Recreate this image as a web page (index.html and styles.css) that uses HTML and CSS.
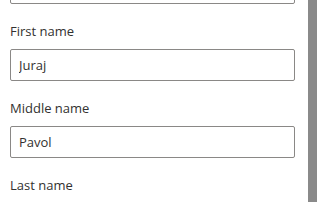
FILE: index.html
```html
<!DOCTYPE html>
<html lang="en">
<head>
<meta charset="utf-8">
<title>Name form</title>
<link rel="stylesheet" href="styles.css">
</head>
<body>
<div class="page">
  <form class="form">
    <div class="field field-first">
      <input class="input" type="text" value="" aria-label="Title">
    </div>
    <div class="field">
      <label class="label" for="first">First name</label>
      <input class="input" id="first" type="text" value="Juraj">
    </div>
    <div class="field">
      <label class="label" for="middle">Middle name</label>
      <input class="input" id="middle" type="text" value="Pavol">
    </div>
    <div class="field">
      <label class="label" for="last">Last name</label>
      <input class="input" id="last" type="text" value="">
    </div>
  </form>
  <div class="scrollbar"></div>
</div>
</body>
</html>
```
FILE: styles.css
```css
html, body {
  margin: 0;
  padding: 0;
  background: #ffffff;
  overflow: hidden;
}
.page {
  position: relative;
  width: 319px;
  height: 202px;
  overflow: hidden;
  font-family: "Open Sans", "Segoe UI", sans-serif;
  color: #323130;
}
.form {
  display: flex;
  flex-direction: column;
  gap: 15px;
  padding: 0 24px 0 10px;
  margin-top: -28px;
}
.field {
  display: flex;
  flex-direction: column;
}
.label {
  display: block;
  font-size: 13px;
  line-height: 20px;
  padding: 2px 0 8px;
  font-weight: 400;
  color: #323130;
}
.input {
  box-sizing: border-box;
  height: 32px;
  width: 285px;
  margin: 0;
  border: 1px solid #8a8886;
  border-radius: 2px;
  padding: 0 8px;
  font-family: inherit;
  font-size: 13px;
  color: #323130;
  background: #ffffff;
  outline: none;
}
.scrollbar {
  position: absolute;
  top: 0;
  bottom: 0;
  right: 2px;
  width: 9px;
  background: #8a8a8a;
}
```
